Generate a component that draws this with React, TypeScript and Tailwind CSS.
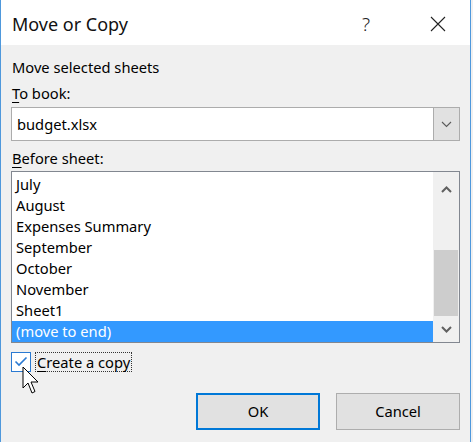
import React from 'react';

const sheets = [
    'July',
    'August',
    'Expenses Summary',
    'September',
    'October',
    'November',
    'Sheet1',
    '(move to end)'
];

const font = { fontFamily: '"Noto Sans", "Open Sans", sans-serif' };

const App: React.FC = () => {
    return (
        <div className="w-[473px] h-[442px] bg-[#f0f0f0] overflow-hidden" style={font}>
            <div className="relative w-[471px] h-[442px] border-x border-[#4e98dc] bg-[#f0f0f0] text-[#000]">
                {/* Barra de título */}
                <div className="h-[45px] bg-white flex items-center pl-[11px] pt-[3px]">
                    <span className="text-[18px] text-[#111]">Move or Copy</span>
                    <span className="ml-auto text-[19px] font-light text-[#222] mr-[60px]">?</span>
                    <svg width="16" height="16" viewBox="0 0 16 16" className="mr-[24px]">
                        <path d="M1 1 L15 15 M15 1 L1 15" stroke="#222" strokeWidth="1.1" fill="none" />
                    </svg>
                </div>

                {/* Contenido */}
                <div className="px-[10px] pt-[12px] text-[14.7px] leading-[21px]">
                    <div className="pl-[1px]">Move selected sheets</div>
                    <div className="pl-[1px] mt-[5px]">
                        <span className="underline underline-offset-[3px]">T</span>o book:
                    </div>

                    {/* Combo */}
                    <div className="mt-[3px] h-[34px] flex border border-[#acacac] bg-white">
                        <div className="flex-1 flex items-center pl-[5px]">budget.xlsx</div>
                        <div className="w-[26px] bg-[#e1e1e1] border-l border-[#acacac] flex items-center justify-center">
                            <svg width="11" height="7" viewBox="0 0 11 7">
                                <path d="M1 1 L5.5 5.5 L10 1" stroke="#5a5a5a" strokeWidth="1.1" fill="none" />
                            </svg>
                        </div>
                    </div>

                    <div className="pl-[1px] mt-[7px]">
                        <span className="underline underline-offset-[3px]">B</span>efore sheet:
                    </div>

                    {/* Lista */}
                    <div className="mt-[2px] h-[172px] flex border border-[#828790] bg-white">
                        <div className="flex-1 pt-[2px]">
                            {sheets.map((s, i) => (
                                <div
                                    key={s}
                                    className={
                                        i === sheets.length - 1
                                            ? 'h-[21px] pl-[4px] bg-[#3399ff] text-white'
                                            : 'h-[21px] pl-[4px]'
                                    }
                                >
                                    {s}
                                </div>
                            ))}
                        </div>
                        <div className="w-[26px] bg-[#f0f0f0] flex flex-col">
                            <div className="h-[34px] flex items-center justify-center">
                                <svg width="11" height="7" viewBox="0 0 11 7">
                                    <path d="M1 6 L5.5 1.5 L10 6" stroke="#606060" strokeWidth="2" fill="none" />
                                </svg>
                            </div>
                            <div className="h-[44px]" />
                            <div className="h-[66px] mx-[1px] bg-[#cdcdcd]" />
                            <div className="flex-1 flex items-center justify-center">
                                <svg width="11" height="7" viewBox="0 0 11 7">
                                    <path d="M1 1 L5.5 5.5 L10 1" stroke="#606060" strokeWidth="2" fill="none" />
                                </svg>
                            </div>
                        </div>
                    </div>

                    {/* Casilla */}
                    <div className="mt-[8px] flex items-center h-[21px]">
                        <div className="w-[20px] h-[20px] border border-[#2a7ad2] bg-white flex items-center justify-center">
                            <svg width="14" height="11" viewBox="0 0 14 11">
                                <path d="M1.5 5.5 L5 9 L12.5 1.5" stroke="#2a7ad2" strokeWidth="1.6" fill="none" />
                            </svg>
                        </div>
                        <div className="ml-[4px] px-[1px] border border-dotted border-[#333] leading-[18px]">
                            <span className="underline underline-offset-[3px]">C</span>reate a copy
                        </div>
                    </div>

                    {/* Botones */}
                    <div className="mt-[21px] flex justify-end gap-[16px]">
                        <button className="w-[124px] h-[37px] bg-[#e1e1e1] border-2 border-[#0078d7] text-[14.7px]">
                            OK
                        </button>
                        <button className="w-[124px] h-[37px] bg-[#e1e1e1] border border-[#adadad] text-[14.7px]">
                            Cancel
                        </button>
                    </div>
                </div>

                {/* Cursor */}
                <svg
                    className="absolute left-[21px] top-[366px]"
                    width="20"
                    height="30"
                    viewBox="0 0 20 30"
                >
                    <path
                        d="M1 1 L1 22 L6 17 L10 27 L13 25.5 L9 16 L16 16 Z"
                        fill="#fff"
                        stroke="#000"
                        strokeWidth="1"
                        strokeLinejoin="round"
                    />
                </svg>
            </div>
        </div>
    );
};

export default App;
